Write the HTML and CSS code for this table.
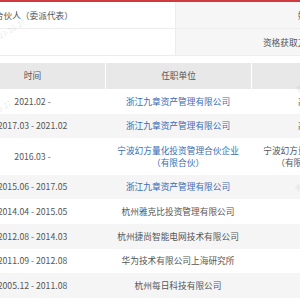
FILE: index.html
```html
<!DOCTYPE html>
<html lang="zh-CN">
<head>
<meta charset="utf-8">
<title>任职经历</title>
<link rel="stylesheet" href="styles.css">
</head>
<body>
<div class="page">
  <div class="info">
    <div class="info-row">
      <div class="cell val">执行事务合伙人（委派代表）</div>
      <div class="cell key">姓名</div>
      <div class="cell val2"></div>
    </div>
    <div class="info-row">
      <div class="cell val"></div>
      <div class="cell key">资格获取方式</div>
      <div class="cell val2"></div>
    </div>
  </div>

  <div class="resume">
    <div class="row head">
      <div class="cell"><span>时间</span></div>
      <div class="cell"><span>任职单位</span></div>
      <div class="cell"><span>职务</span></div>
      <div class="cell"><span>任职部门</span></div>
    </div>
    <div class="row">
      <div class="cell"><span>2021.02 -</span></div>
      <div class="cell"><span class="link">浙江九章资产管理有限公司</span></div>
      <div class="cell"><span>高级投资经理</span></div>
      <div class="cell"><span>投资部</span></div>
    </div>
    <div class="row">
      <div class="cell"><span>2017.03 - 2021.02</span></div>
      <div class="cell"><span class="link">浙江九章资产管理有限公司</span></div>
      <div class="cell"><span>高级投资经理</span></div>
      <div class="cell"><span>投资部</span></div>
    </div>
    <div class="row">
      <div class="cell"><span>2016.03 -</span></div>
      <div class="cell"><span class="link">宁波幻方量化投资管理合伙企业<br>（有限合伙）</span></div>
      <div class="cell"><span>宁波幻方量化投资管理合伙企业<br>（有限合伙）执行合伙人</span></div>
      <div class="cell"><span>-</span></div>
    </div>
    <div class="row">
      <div class="cell"><span>2015.06 - 2017.05</span></div>
      <div class="cell"><span class="link">浙江九章资产管理有限公司</span></div>
      <div class="cell"><span>总经理</span></div>
      <div class="cell"><span>-</span></div>
    </div>
    <div class="row">
      <div class="cell"><span>2014.04 - 2015.05</span></div>
      <div class="cell"><span>杭州雅克比投资管理有限公司</span></div>
      <div class="cell"><span>总经理</span></div>
      <div class="cell"><span>-</span></div>
    </div>
    <div class="row">
      <div class="cell"><span>2012.08 - 2014.03</span></div>
      <div class="cell"><span>杭州捷尚智能电网技术有限公司</span></div>
      <div class="cell"><span>总经理</span></div>
      <div class="cell"><span>-</span></div>
    </div>
    <div class="row">
      <div class="cell"><span>2011.09 - 2012.08</span></div>
      <div class="cell"><span>华为技术有限公司上海研究所</span></div>
      <div class="cell"><span>工程师</span></div>
      <div class="cell"><span>-</span></div>
    </div>
    <div class="row">
      <div class="cell"><span>2005.12 - 2011.08</span></div>
      <div class="cell"><span>杭州每日科技有限公司</span></div>
      <div class="cell"><span>工程师</span></div>
      <div class="cell"><span>-</span></div>
    </div>
  </div>

  <span class="wm wm1">2023-10-27</span>
  <span class="wm wm2">2023-10-27</span>
  <span class="wm wm3">资管</span>
  <span class="wm wm4">资管</span>
</div>
</body>
</html>
```

FILE: styles.css
```css
html, body {
  margin: 0;
  padding: 0;
  overflow: hidden;
  background: #fff;
}

body {
  font-family: "Noto Sans CJK SC", "Noto Sans", sans-serif;
  font-size: 8.7px;
  color: #555;
}

.page {
  position: relative;
  margin-left: -40px;
  width: 740px;
}

/* top key/value table */
.info {
  border-top: 2px solid #d0393e;
}

.info-row {
  display: grid;
  grid-template-columns: 215px 150px 375px;
  height: 26px;
  border-bottom: 1px solid #ededed;
}

.cell {
  display: flex;
  align-items: center;
  white-space: nowrap;
}

.info .key {
  background: #f6f6f6;
  justify-content: flex-end;
  padding-right: 10px;
  border-left: 1px solid #ededed;
}

/* resume table */
.resume {
  margin-top: 7px;
}

.row {
  display: grid;
  grid-template-columns: 145px 146px 146px 303px;
}

.row .cell {
  justify-content: center;
  text-align: center;
  padding: 6.55px 10px;
  line-height: 11.6px;
}

.row.head {
  background: #e8e8e8;
  height: 26px;
}

.row.head .cell {
  padding: 0 10px;
}

.row.head .cell + .cell {
  border-left: 1px solid #fff;
}

.row:nth-child(odd):not(.head) {
  background: #f5f5f5;
}

.link {
  color: #3a6cb4;
}

/* watermarks */
.wm {
  position: absolute;
  font-size: 7.5px;
  line-height: 10px;
  color: rgba(0, 0, 0, 0.12);
  white-space: nowrap;
  transform: rotate(-30deg);
  pointer-events: none;
}

.wm1 { left: 29px; top: 26px; }
.wm2 { left: 15px; top: 107px; }
.wm3 { left: 335px; top: 82px; }
.wm4 { left: 334px; top: 181px; }
```
